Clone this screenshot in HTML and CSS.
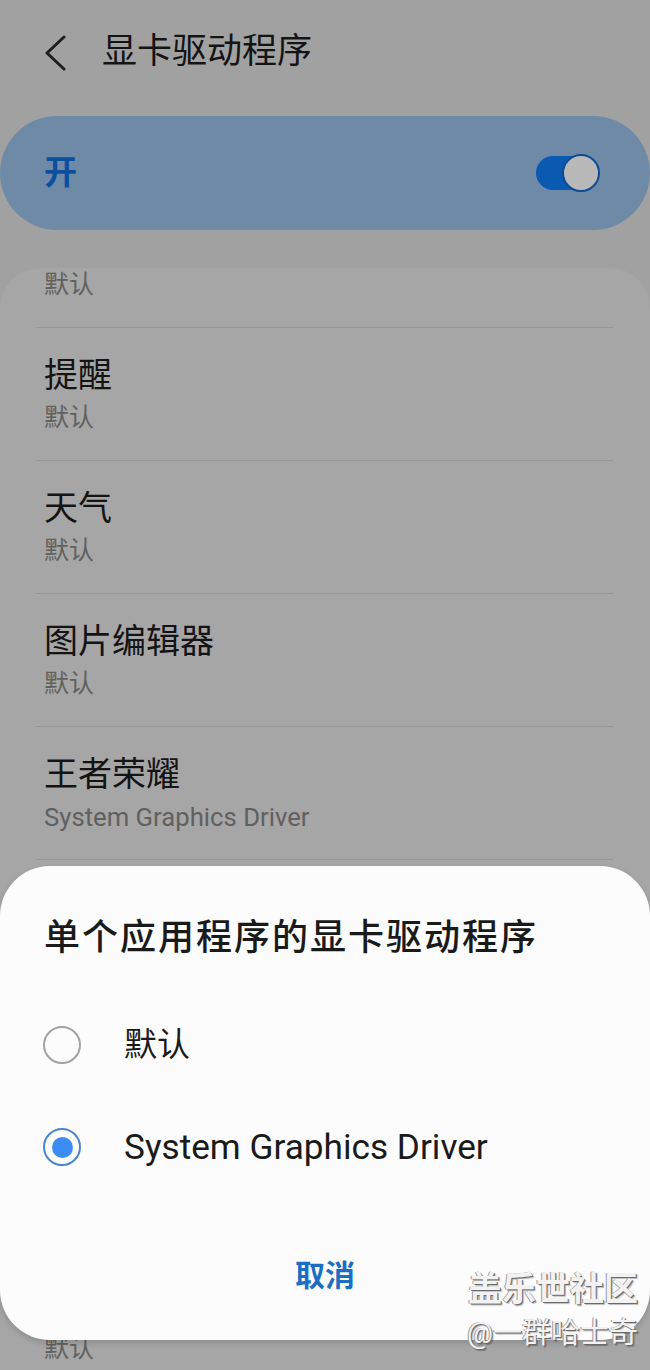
FILE: index.html
```html
<!DOCTYPE html>
<html lang="zh-CN">
<head>
    <meta charset="UTF-8">
    <meta name="viewport" content="width=device-width, initial-scale=1.0">
    <title>显卡驱动程序</title>
    <link rel="stylesheet" href="styles.css">
</head>
<body>
    <div class="screen">
        <header class="topbar">
            <svg class="back" width="24" height="36" viewBox="0 0 24 36">
                <polyline points="20,2 3,18 20,34" fill="none" stroke="#1e1e1e" stroke-width="3" stroke-linecap="round" stroke-linejoin="round"/>
            </svg>
            <h1 class="title">显卡驱动程序</h1>
        </header>

        <div class="master">
            <span class="master-label">开</span>
            <div class="switch">
                <span class="switch-track"></span>
                <span class="switch-knob"></span>
            </div>
        </div>

        <div class="card">
            <ul class="app-list">
                <!-- scrolled: only the tail of this row is still visible -->
                <li class="app-row first">
                    <div class="app-driver">默认</div>
                </li>
                <li class="app-row">
                    <div class="app-name">提醒</div>
                    <div class="app-driver">默认</div>
                </li>
                <li class="app-row">
                    <div class="app-name">天气</div>
                    <div class="app-driver">默认</div>
                </li>
                <li class="app-row">
                    <div class="app-name">图片编辑器</div>
                    <div class="app-driver">默认</div>
                </li>
                <li class="app-row">
                    <div class="app-name">王者荣耀</div>
                    <div class="app-driver latin">System Graphics Driver</div>
                </li>
                <li class="app-row">
                    <div class="app-name">相机</div>
                    <div class="app-driver">默认</div>
                </li>
                <li class="app-row">
                    <div class="app-name">图库</div>
                    <div class="app-driver">默认</div>
                </li>
                <li class="app-row">
                    <div class="app-name">音乐</div>
                    <div class="app-driver">默认</div>
                </li>
                <li class="app-row">
                    <div class="app-name">信息</div>
                    <div class="app-driver">默认</div>
                </li>
            </ul>
        </div>
    </div>

    <div class="sheet">
        <h2 class="sheet-title">单个应用程序的显卡驱动程序</h2>
        <div class="options">
            <label class="option">
                <span class="radio"></span>
                <span class="option-text">默认</span>
            </label>
            <label class="option">
                <span class="radio checked"></span>
                <span class="option-text latin">System Graphics Driver</span>
            </label>
        </div>
        <button class="cancel">取消</button>
    </div>

    <div class="watermark">
        <div class="wm-big">盖乐世社区</div>
        <div class="wm-small">@一群哈士奇</div>
    </div>
</body>
</html>
```

FILE: styles.css
```css
body {
    margin: 0;
    height: 1370px;
    overflow: hidden;
    background: #a1a1a1;
    font-family: Roboto, "Noto Sans CJK SC", sans-serif;
    color: #141414;
}
.screen {
    display: flex;
    flex-direction: column;
    height: 1370px;
}
.topbar {
    height: 104px;
    display: flex;
    align-items: center;
    padding-left: 44px;
}
.back {
    display: block;
    margin-top: 2px;
}
.title {
    margin: 0 0 0 34px;
    font-size: 35px;
    font-weight: 400;
    line-height: 44px;
}
.master {
    margin-top: 12px;
    height: 114px;
    border-radius: 57px;
    background: #6e8aa7;
    display: flex;
    align-items: center;
    justify-content: space-between;
    padding: 0 50px 0 44px;
}
.master-label {
    font-size: 33px;
    font-weight: 700;
    color: #0b4f9f;
    line-height: 40px;
}
.switch {
    position: relative;
    width: 64px;
    height: 38px;
}
.switch-track {
    position: absolute;
    left: 0;
    top: 2px;
    width: 54px;
    height: 34px;
    border-radius: 17px;
    background: #0a5ab2;
}
.switch-knob {
    position: absolute;
    right: 0;
    top: 0;
    width: 34px;
    height: 34px;
    border-radius: 50%;
    background: #b9b9b9;
    border: 2px solid #0d4c94;
}
.card {
    margin-top: 38px;
    flex: 1;
    background: #a6a6a6;
    border-radius: 40px 40px 0 0;
    overflow: hidden;
}
.app-list {
    list-style: none;
    margin: 0;
    padding: 0 37px 0 36px;
}
.app-row {
    padding: 27px 0 27px 8px;
    border-bottom: 1px solid #959595;
}
.app-row.first {
    padding-top: 2px;
}
.app-name {
    font-size: 34px;
    line-height: 40px;
}
.app-name + .app-driver {
    margin-top: 8px;
}
.app-driver {
    font-size: 25px;
    line-height: 30px;
    color: #606060;
}
.app-driver.latin {
    font-size: 25.7px;
}
.sheet {
    position: absolute;
    top: 866px;
    left: 0;
    right: 0;
    height: 474px;
    box-sizing: border-box;
    background: #fcfcfc;
    border-radius: 50px;
    box-shadow: 0 3px 6px rgba(0, 0, 0, 0.15);
    padding: 50px 0 32px;
    display: flex;
    flex-direction: column;
}
.sheet-title {
    margin: 0 0 0 44px;
    font-size: 36px;
    font-weight: 500;
    line-height: 44px;
    letter-spacing: 2px;
    color: #1a1a1a;
}
.options {
    margin-top: 34px;
}
.option {
    display: flex;
    align-items: center;
    height: 102px;
    padding-left: 43px;
}
.radio {
    width: 34px;
    height: 34px;
    border-radius: 50%;
    border: 2px solid #a2a2a2;
    box-sizing: content-box;
    display: flex;
    align-items: center;
    justify-content: center;
}
.radio.checked {
    border-color: #4a86d0;
}
.radio.checked::after {
    content: "";
    width: 21px;
    height: 21px;
    border-radius: 50%;
    background: #3c8cf5;
}
.option-text {
    margin-left: 43px;
    font-size: 33px;
    line-height: 40px;
    color: #1a1a1a;
}
.option-text.latin {
    font-size: 35.2px;
}
.cancel {
    margin: 40px auto 0;
    height: 70px;
    padding: 0 30px;
    border: none;
    background: none;
    font-family: inherit;
    font-size: 30px;
    font-weight: 700;
    color: #1a6fc4;
}
.watermark {
    position: absolute;
    right: 12px;
    top: 1268px;
    text-align: right;
    color: #f2f2f2;
    text-shadow: 1px 1px 0 #6a6a6a, -1px 0 0 #9a9a9a, 2px 2px 1px rgba(0, 0, 0, 0.25);
}
.wm-big {
    font-size: 34px;
    line-height: 42px;
    font-weight: 700;
}
.wm-small {
    margin-top: 6px;
    font-size: 29px;
    line-height: 34px;
}
```
